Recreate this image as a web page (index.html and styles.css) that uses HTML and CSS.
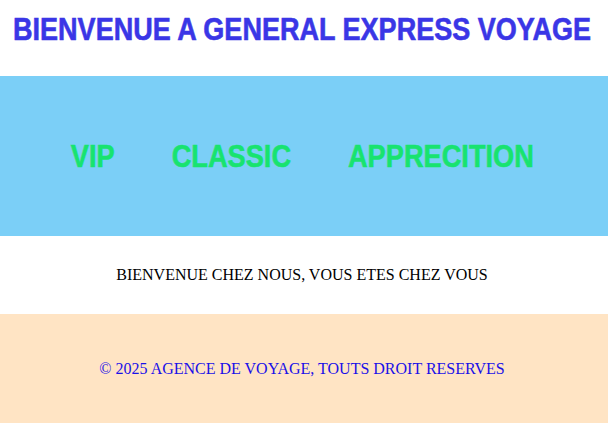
FILE: index.html
```html
<!DOCTYPE html>
<html lang="fr">
<head>
<meta charset="utf-8">
<title>General Express Voyage</title>
<link rel="stylesheet" href="styles.css">
</head>
<body>
<header class="top">
  <h1 class="title">BIENVENUE A GENERAL EXPRESS VOYAGE</h1>
</header>
<nav class="nav">
  <div class="nav-inner">
    <a class="nav-item">VIP</a>
    <a class="nav-item">CLASSIC</a>
    <a class="nav-item">APPRECITION</a>
  </div>
</nav>
<main class="welcome">
  <p>BIENVENUE CHEZ NOUS, VOUS ETES CHEZ VOUS</p>
</main>
<footer class="footer">
  <p>&copy; 2025 AGENCE DE VOYAGE, TOUTS DROIT RESERVES</p>
</footer>
</body>
</html>
```
FILE: styles.css
```css
html, body { margin: 0; padding: 0; background: #ffffff; }
body { font-family: "Liberation Serif", "Times New Roman", serif; }
.top, .nav, .welcome, .footer { box-sizing: border-box; padding-right: 4px; }
.top { height: 76px; display: flex; justify-content: center; align-items: flex-start; }
.title {
  margin: 0; padding-top: 11px; white-space: nowrap;
  font-family: "Liberation Sans", Arial, sans-serif;
  font-weight: bold; font-size: 32px; color: #3a36e6; line-height: normal;
  -webkit-text-stroke: 0.6px #3a36e6;
  transform: scaleX(0.845);
}
.nav {
  height: 160px; background: #7bcff7; padding-top: 1px;
  display: flex; justify-content: center; align-items: center;
}
.nav-inner { display: flex; gap: 67px; transform: scaleX(0.85); white-space: nowrap; }
.nav-item {
  font-family: "Liberation Sans", Arial, sans-serif;
  font-weight: bold; font-size: 32px; color: #18e36f;
  -webkit-text-stroke: 0.6px #18e36f;
}
.welcome { height: 78px; display: flex; justify-content: center; align-items: center; }
.welcome p { margin: 0; font-size: 16px; color: #000; }
.footer { height: 109px; background: #ffe4c4; display: flex; justify-content: center; align-items: center; }
.footer p { margin: 0; font-size: 16px; color: #1a10e8; }
```
